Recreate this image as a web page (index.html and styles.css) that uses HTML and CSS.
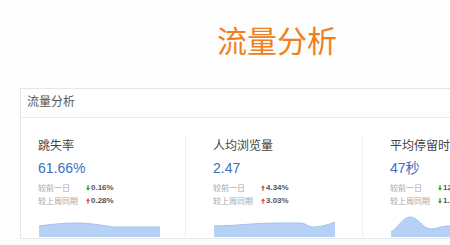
FILE: index.html
```html
<!DOCTYPE html>
<html lang="zh-CN">
<head>
  <meta charset="UTF-8">
  <title>流量分析</title>
  <link rel="stylesheet" href="styles.css">
</head>
<body>
  <h1 class="hero">流量分析</h1>

  <div class="panel">
    <div class="panel-head">流量分析</div>

    <div class="metrics">
      <!-- 跳失率 -->
      <div class="metric">
        <div class="metric-name">跳失率</div>
        <div class="metric-value">61.66%</div>
        <div class="compare">
          <span class="compare-label">较前一日</span>
          <svg class="arrow down" viewBox="0 0 6 8"><path d="M2 0h2v4h2L3 8 0 4h2z"/></svg>
          <span class="compare-num">0.16%</span>
        </div>
        <div class="compare">
          <span class="compare-label">较上周同期</span>
          <svg class="arrow up" viewBox="0 0 6 8"><path d="M2 8h2V4h2L3 0 0 4h2z"/></svg>
          <span class="compare-num">0.28%</span>
        </div>
        <svg class="spark" viewBox="0 0 121 22" preserveAspectRatio="none">
          <path class="area" d="M0 11 C14 9, 26 8, 38 8 S60 10, 75 12 L121 12 V22 H0 Z"/>
          <path class="line" d="M0 11 C14 9, 26 8, 38 8 S60 10, 75 12 L121 12"/>
        </svg>
      </div>

      <!-- 人均浏览量 -->
      <div class="metric">
        <div class="metric-name">人均浏览量</div>
        <div class="metric-value">2.47</div>
        <div class="compare">
          <span class="compare-label">较前一日</span>
          <svg class="arrow up" viewBox="0 0 6 8"><path d="M2 8h2V4h2L3 0 0 4h2z"/></svg>
          <span class="compare-num">4.34%</span>
        </div>
        <div class="compare">
          <span class="compare-label">较上周同期</span>
          <svg class="arrow up" viewBox="0 0 6 8"><path d="M2 8h2V4h2L3 0 0 4h2z"/></svg>
          <span class="compare-num">3.03%</span>
        </div>
        <svg class="spark" viewBox="0 0 121 22" preserveAspectRatio="none">
          <path class="area" d="M0 11 C20 11, 40 8, 60 8 L86 8 C92 8, 94 12, 99 12 C106 12, 114 10, 121 7 V22 H0 Z"/>
          <path class="line" d="M0 11 C20 11, 40 8, 60 8 L86 8 C92 8, 94 12, 99 12 C106 12, 114 10, 121 7"/>
        </svg>
      </div>

      <!-- 平均停留时长 -->
      <div class="metric">
        <div class="metric-name">平均停留时长</div>
        <div class="metric-value">47秒</div>
        <div class="compare">
          <span class="compare-label">较前一日</span>
          <svg class="arrow down" viewBox="0 0 6 8"><path d="M2 0h2v4h2L3 8 0 4h2z"/></svg>
          <span class="compare-num">12.50%</span>
        </div>
        <div class="compare">
          <span class="compare-label">较上周同期</span>
          <svg class="arrow down" viewBox="0 0 6 8"><path d="M2 0h2v4h2L3 8 0 4h2z"/></svg>
          <span class="compare-num">1.26%</span>
        </div>
        <svg class="spark" viewBox="0 0 121 22" preserveAspectRatio="none">
          <path class="area" d="M0 17 C8 12, 12 2, 19 2 C27 2, 32 14, 40 14 C46 14, 50 11, 56 11 C64 11, 80 12, 121 12 V22 H0 Z"/>
          <path class="line" d="M0 17 C8 12, 12 2, 19 2 C27 2, 32 14, 40 14 C46 14, 50 11, 56 11 C64 11, 80 12, 121 12"/>
        </svg>
      </div>
    </div>
  </div>
</body>
</html>
```

FILE: styles.css
```css
/* Page */
body {
  margin: 0;
  background-color: #fdfdfd;
  font-family: "Noto Sans CJK SC", "Noto Sans", sans-serif;
  color: #444;
  overflow: hidden;
}

.hero {
  margin: 0;
  padding: 24px 0 0 217px;
  font-size: 30px;
  font-weight: normal;
  line-height: 30px;
  color: #f0801e;
}

/* Panel */
.panel {
  width: 520px;
  margin: 34px 0 0 20px;
  padding-bottom: 1px;
  border: 1px solid #e6e6e6;
  background-color: #fff;
}

.panel-head {
  height: 28px;
  padding-left: 6px;
  border-bottom: 1px solid #ececec;
  font-size: 12px;
  line-height: 24px;
  color: #555;
}

/* Metric cards */
.metrics {
  display: flex;
  margin-top: 17px;
  padding-left: 17px;
}

.metric {
  display: flex;
  flex-direction: column;
  width: 147px;
  height: 100px;
  padding-top: 2px;
  flex-shrink: 0;
}

.metric + .metric {
  width: 149px;
  padding-left: 27px;
  border-left: 1px solid #efefef;
}

.metric-name {
  font-size: 12px;
  line-height: 16px;
  color: #444;
}

.metric-value {
  margin-top: 6px;
  font-family: "Liberation Sans", "Noto Sans CJK SC", sans-serif;
  font-size: 14px;
  line-height: 18px;
  color: #3a6fc0;
}

.compare {
  display: flex;
  align-items: center;
  height: 13px;
  font-size: 8px;
  line-height: 13px;
  white-space: nowrap;
}

.metric-value + .compare {
  margin-top: 4px;
}

.compare-label {
  width: 48px;
  color: #a8a8a8;
}

.compare-num {
  margin-left: 1px;
  font-family: "Liberation Sans", sans-serif;
  font-weight: bold;
  color: #555;
}

.arrow {
  width: 4px;
  height: 6px;
}

.arrow.up { fill: #e0484c; }
.arrow.down { fill: #2f9a3c; }

/* Sparklines */
.spark {
  display: block;
  width: 121px;
  height: 22px;
  margin: auto 0 0 1px;
  overflow: visible;
}

.spark .area {
  fill: #b5d1f5;
}

.spark .line {
  fill: none;
  stroke: #a3c3ef;
  stroke-width: 1;
}
```
